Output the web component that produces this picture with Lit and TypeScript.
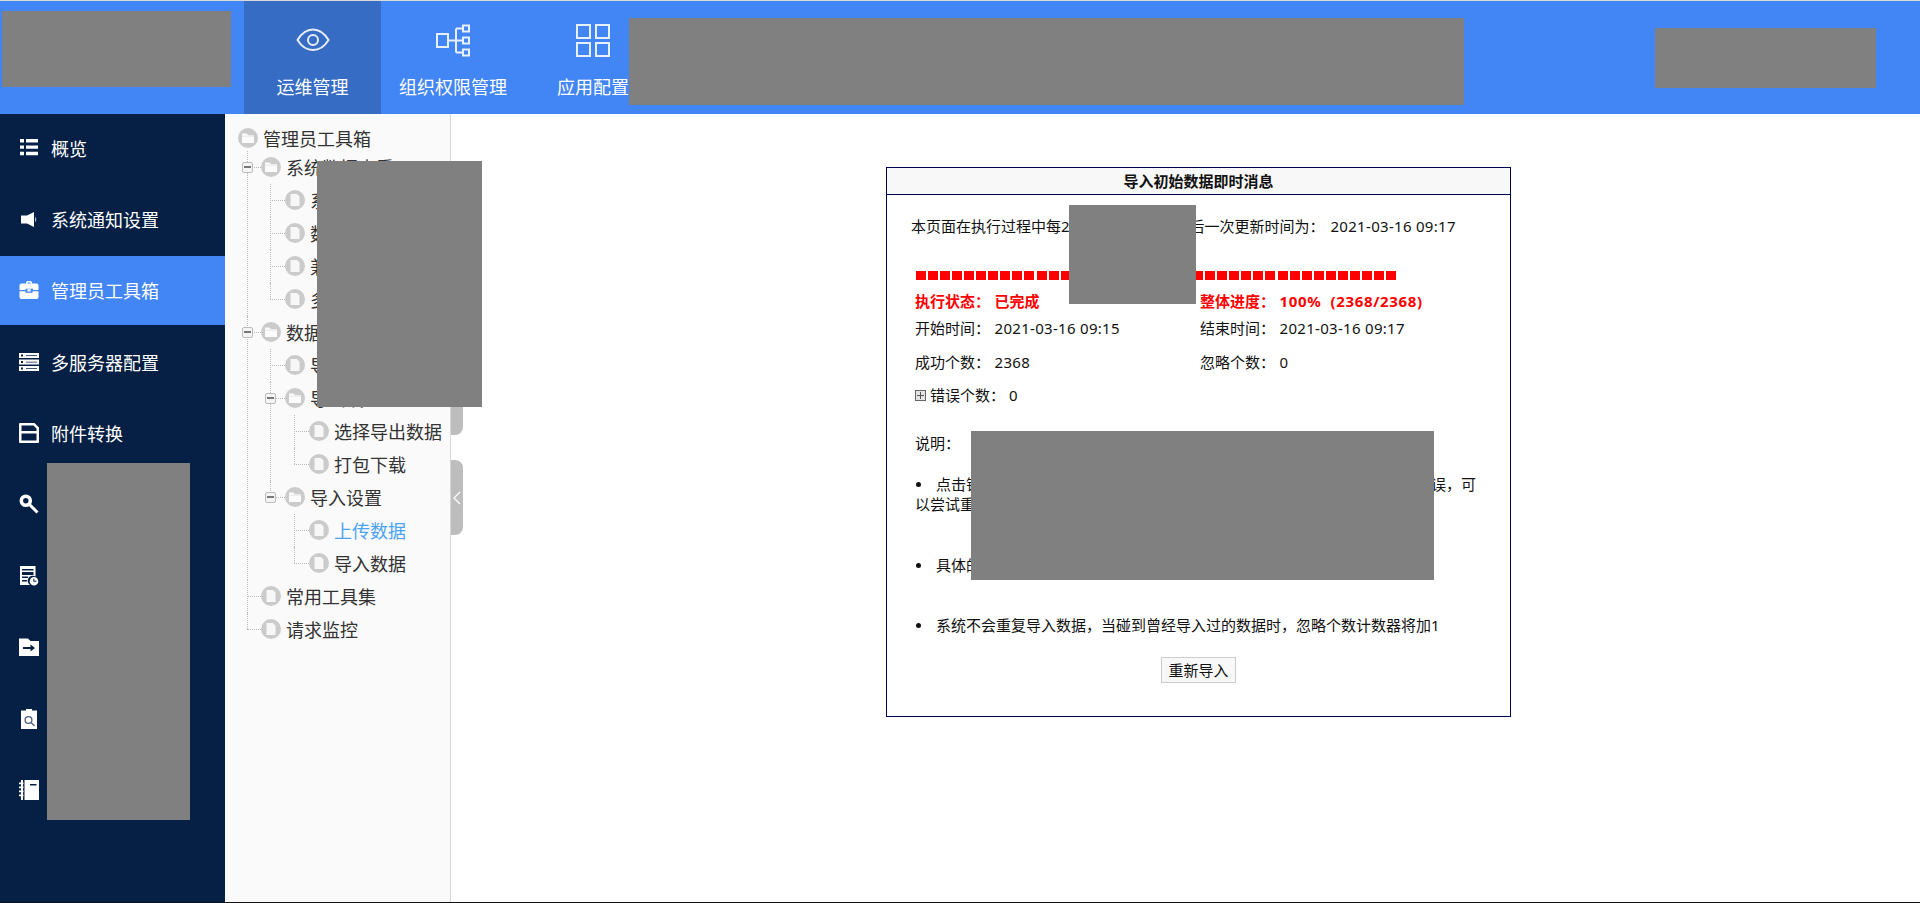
import { LitElement, html, css, svg, nothing } from "lit";
import { customElement } from "lit/decorators.js";

interface TreeNode {
    label: string;
    kind: "folder" | "file";
    active?: boolean;
    children?: TreeNode[];
}

const TREE: TreeNode = {
    label: "管理员工具箱",
    kind: "folder",
    children: [
        {
            label: "系统数据查看",
            kind: "folder",
            children: [
                { label: "系统信息", kind: "file" },
                { label: "数据统计", kind: "file" },
                { label: "兼容检查", kind: "file" },
                { label: "多语言", kind: "file" },
            ],
        },
        {
            label: "数据导入导出",
            kind: "folder",
            children: [
                { label: "导出记录", kind: "file" },
                {
                    label: "导出设置",
                    kind: "folder",
                    children: [
                        { label: "选择导出数据", kind: "file" },
                        { label: "打包下载", kind: "file" },
                    ],
                },
                {
                    label: "导入设置",
                    kind: "folder",
                    children: [
                        { label: "上传数据", kind: "file", active: true },
                        { label: "导入数据", kind: "file" },
                    ],
                },
            ],
        },
        { label: "常用工具集", kind: "file" },
        { label: "请求监控", kind: "file" },
    ],
};

const NAV_ICONS = [
    svg`<path d="M1.5 20C6 12.5 11 9.5 17 9.5S28 12.5 32.5 20C28 27.5 23 30 17 30S6 27.5 1.5 20Z"/><circle cx="17" cy="20" r="5"/>`,
    svg`<rect x="1" y="10" width="11" height="13"/><path d="M12 16.5H20M20 4.5V28.5M20 4.5H27M20 16.5H27M20 28.5H27"/><rect x="27" y="1.5" width="6" height="6"/><rect x="27" y="13.5" width="6" height="6"/><rect x="27" y="25.5" width="6" height="6"/>`,
    svg`<rect x="1" y="1" width="13" height="13"/><rect x="20" y="1" width="13" height="13"/><rect x="1" y="19" width="13" height="13"/><rect x="20" y="19" width="13" height="13"/>`,
];

const NAV = ["运维管理", "组织权限管理", "应用配置"];

const MENU = [
    {
        label: "概览",
        icon: svg`<path d="M1 1h4v3.4H1zM7 1h12v3.4H7zM1 7.400h4v3.400H1zM7 7.400h12v3.400H7zM1 13.800h4v3.400H1zM7 13.800h12v3.400H7z"/>`,
    },
    {
        label: "系统通知设置",
        icon: svg`<path d="M2 6.500h6L15 3v15l-7-3.500H2z"/><path d="M16.300 7.500c1.200 2 1.200 4 0 6z"/>`,
    },
    {
        label: "管理员工具箱",
        icon: svg`<path fill-rule="evenodd" d="M7 3.500V2.800C7 1.800 7.800 1 8.800 1h2.400c1 0 1.800.8 1.800 1.800v.7h4.500c1.200 0 2 .8 2 2V10h-5.500V8.800h-7.500V10H.5V5.500c0-1.200.8-2 2-2zm1.500 0h3v-1h-3zM.5 11.300h6v1.400h7v-1.400h6V17c0 1.200-.8 2-2 2h-15c-1.200 0-2-.8-2-2zM8.300 9.300h3.400v2.200H8.300z"/>`,
    },
    {
        label: "多服务器配置",
        icon: svg`<path fill-rule="evenodd" d="M0 1h20v5H0zM2 2.500v2h2v-2zM7 3.200v.8h11v-.8zM0 7.500h20v5H0zM2 9v2h2V9zM7 9.700v.8h11v-.8zM0 14h20v5H0zM2 15.500v2h2v-2zM7 16.200v.8h11v-.8z"/>`,
    },
    {
        label: "附件转换",
        icon: svg`<path fill-rule="evenodd" d="M1 0h14.500L20 4.500V19a1 1 0 0 1-1 1H1a1 1 0 0 1-1-1V1a1 1 0 0 1 1-1zM2.500 2.500v5.500h15V5.500l-3-3zM2.500 10.500v7h15v-7z"/>`,
    },
    {
        label: "密钥管理",
        icon: svg`<circle cx="6.800" cy="6.800" r="4.500" fill="none" stroke="#fff" stroke-width="3.600"/><path d="M10.500 10.500L18.500 18.500" fill="none" stroke="#fff" stroke-width="3"/>`,
    },
    {
        label: "日志管理",
        icon: svg`<path fill-rule="evenodd" d="M1 0h15.500v10.500a5 5 0 0 0-5.500 8.500H1zM3 3v1.500h11.500V3zM3 6v3h11.500V6zM3 10.500V12h6v-1.500zM3 14v1.500h5V14z"/><path fill-rule="evenodd" d="M15 11a4.300 4.300 0 1 1 0 8.600 4.300 4.300 0 0 1 0-8.600zm-.6 1.800v3h3v-1h-2v-2z"/>`,
    },
    {
        label: "文件迁移",
        icon: svg`<path fill-rule="evenodd" d="M0 1.500h9l2.500 2.500H20v15H0zM4 10v2h7.500v2.500L16 11l-4.500-3.500V10z"/>`,
    },
    {
        label: "审计查询",
        icon: svg`<path d="M7 0h6v1.500h5V20H2V1.500h5z"/><circle cx="9.500" cy="11" r="3.400" fill="none" stroke="#4d5f7d" stroke-width="1.300"/><path d="M12 13.500L15.500 17" fill="none" stroke="#4d5f7d" stroke-width="1.300"/>`,
    },
    {
        label: "操作手册",
        icon: svg`<path fill-rule="evenodd" d="M5.500 0H20v20H5.500zM11 4v1.500h6.500V4z"/><path d="M0 2.500h4.500v1.800H0zM0 6.500h4.500v1.800H0zM0 10.500h4.500v1.800H0zM0 14.500h4.500v1.800H0zM2 0h2v20H2z"/>`,
    },
];

const folderGlyph = svg`<path d="M4 5.500h4.500l1.500 1.700h6V15H4z" fill="#fbfbfb"/><path d="M4 8.200h12" stroke="#e4e4e4" stroke-width="0.800"/>`;
const fileGlyph = svg`<path d="M5.500 4h6.500l2.500 2.500V16h-9z" fill="#f7f7f7"/>`;

@customElement("app-root")
export class AppRoot extends LitElement {
    static styles = css`
    :host {
      display: flex;
      flex-direction: column;
      position: relative;
      height: 903px;
      box-sizing: border-box;
      border-top: 1px solid #d9d9d9;
      border-bottom: 1px solid #111;
      overflow: hidden;
      background: #fff;
      font-family: "Noto Sans", "Noto Sans CJK SC", sans-serif;
      color: #111;
    }

    .topbar {
      display: flex;
      flex: none;
      height: 113px;
      padding-left: 244px;
      background: #4285f4;
      color: #fff;
    }

    .nav-item {
      display: flex;
      flex-direction: column;
      align-items: center;
      box-sizing: border-box;
      min-width: 136px;
      padding: 19px 18px 0;
      font-size: 18px;
      line-height: 26px;
    }

    .nav-item.active {
      width: 137px;
      background: #366cc4;
    }

    .nav-item svg {
      width: 34px;
      height: 40px;
      margin-bottom: 14px;
      fill: none;
      stroke: #fff;
      stroke-width: 2;
      opacity: 0.88;
    }

    .body {
      display: flex;
      flex: 1;
      min-height: 0;
    }

    .menu {
      flex: none;
      width: 225px;
      background: #051f45;
      color: #fff;
    }

    .menu-item {
      display: flex;
      align-items: center;
      gap: 12px;
      height: 69px;
      margin-bottom: 2.4px;
      padding-left: 19px;
      font-size: 18px;
    }

    .menu-item:first-child {
      margin-top: -1px;
    }

    .menu-item.active {
      background: #4285f4;
    }

    .menu-item svg {
      flex: none;
      width: 20px;
      height: 20px;
      fill: #fff;
    }

    .tree {
      flex: none;
      box-sizing: border-box;
      width: 226px;
      padding: 7.5px 0 0 13px;
      background: #fafafa;
      border-right: 1px solid #d8d8d8;
      font-size: 18px;
      color: #333;
    }

    ul {
      margin: 0;
      padding: 0 0 0 24px;
      list-style: none;
    }

    .tree > ul {
      padding-left: 0;
    }

    .tree > ul > li > ul {
      margin-top: -4px;
      padding-left: 23px;
    }

    li {
      position: relative;
    }

    .row {
      display: flex;
      align-items: center;
      gap: 5px;
      height: 33px;
      white-space: nowrap;
    }

    .row svg {
      flex: none;
      width: 20px;
      height: 20px;
    }

    .row.active {
      color: #4aa3f5;
    }

    li.branch::before {
      content: "";
      position: absolute;
      left: -15px;
      top: 0;
      bottom: 0;
      border-left: 1px dotted #bbb;
    }

    li.branch:last-child::before {
      bottom: auto;
      height: 16px;
    }

    li.branch::after {
      content: "";
      position: absolute;
      left: -15px;
      top: 16px;
      width: 15px;
      border-top: 1px dotted #bbb;
    }

    .tree > ul > li > ul > li::before,
    .tree > ul > li > ul > li::after {
      left: -14px;
    }

    .tree > ul > li > ul > li::after {
      width: 14px;
    }

    .tree > ul > li > ul > li > .toggle {
      left: -19px;
    }

    .toggle {
      position: absolute;
      left: -20px;
      top: 11px;
      z-index: 1;
      box-sizing: border-box;
      width: 11px;
      height: 11px;
      border: 1px solid #bbb;
      border-radius: 2px;
      background: #f4f4f4;
    }

    .toggle::after {
      content: "";
      display: block;
      margin: 3px 1px 0;
      height: 2px;
      background: #777;
    }

    .handle {
      position: absolute;
      left: 451px;
      width: 12px;
      height: 75px;
      border-radius: 0 8px 8px 0;
      background: #bdbdbd;
    }

    .handle.upper {
      top: 359px;
    }

    .handle.lower {
      top: 459px;
      display: flex;
      align-items: center;
      justify-content: center;
    }

    .handle svg {
      width: 8px;
      height: 14px;
      fill: none;
      stroke: #fff;
      stroke-width: 1.2;
    }

    .content {
      flex: 1;
      padding: 53px 0 0 435px;
    }

    .panel {
      box-sizing: border-box;
      width: 625px;
      height: 550px;
      border: 1px solid #000050;
      font-size: 15px;
    }

    .panel-title {
      height: 26px;
      border-bottom: 1px solid #000050;
      background: #f8f8f8;
      font-weight: 700;
      line-height: 26px;
      text-align: center;
    }

    .panel-body {
      padding: 19px 28px 0;
      line-height: 24px;
    }

    .refresh {
      margin-left: -4px;
    }

    .num {
      letter-spacing: 0.3px;
    }

    .status .num {
      letter-spacing: 0.65px;
    }

    .refresh .num {
      margin-left: 2px;
    }

    .bar {
      width: 481px;
      height: 9px;
      margin: 33px 0 0 1px;
      background: repeating-linear-gradient(90deg, #f00 0 10px, transparent 10px 12.05px);
    }

    .grid {
      display: grid;
      grid-template-columns: 285px 1fr;
      margin-top: 9px;
    }

    .field {
      display: flex;
      height: 24px;
    }

    .field.status {
      height: 27px;
      color: #f00;
      font-weight: 700;
    }

    .field.count {
      height: 34px;
      padding-top: 10px;
    }

    .key {
      width: 79.5px;
    }

    .errors {
      display: flex;
      align-items: center;
      margin-top: -1px;
    }

    .errors .key {
      width: 79px;
    }

    .plus {
      box-sizing: border-box;
      width: 11px;
      height: 11px;
      margin-right: 4px;
      border: 1px solid #666;
      background: linear-gradient(#555, #555) center / 7px 1px no-repeat,
        linear-gradient(#555, #555) center / 1px 7px no-repeat, #e4e4e4;
    }

    .notes-title {
      margin-top: 24px;
    }

    .note {
      margin: 19px 0 0;
      line-height: 20px;
    }

    .note.second {
      margin-top: 41px;
    }

    .note.third {
      margin-top: 40px;
    }

    .note .dot {
      display: inline-block;
      box-sizing: border-box;
      width: 5px;
      height: 5px;
      margin: 0 15px 2px 1px;
      border-radius: 50%;
      background: #111;
      vertical-align: middle;
    }

    .actions {
      display: flex;
      justify-content: center;
      margin-top: 22px;
    }

    button {
      box-sizing: border-box;
      width: 75px;
      height: 26px;
      padding: 0;
      border: 1px solid #ccc;
      background: #f8f8f8;
      font: inherit;
      line-height: 24px;
      color: #111;
    }

    .mask {
      position: absolute;
      background: #808080;
    }

    .mask.logo {
      left: 2px;
      top: 10px;
      width: 229px;
      height: 76px;
    }

    .mask.top-mid {
      left: 629px;
      top: 17px;
      width: 835px;
      height: 87px;
    }

    .mask.top-right {
      left: 1655px;
      top: 27px;
      width: 221px;
      height: 60px;
    }

    .mask.side {
      left: 47px;
      top: 462px;
      width: 143px;
      height: 357px;
    }

    .mask.tree-mask {
      left: 317px;
      top: 160px;
      width: 165px;
      height: 246px;
    }

    .mask.bar-mask {
      left: 1069px;
      top: 204px;
      width: 127px;
      height: 99px;
    }

    .mask.note-mask {
      left: 971px;
      top: 430px;
      width: 463px;
      height: 149px;
    }
  `;

    renderNode(node: TreeNode, depth: number): unknown {
        const open = node.kind === "folder" && node.children;
        return html`
      <li class=${depth > 0 ? "branch" : ""}>
        ${open && depth > 0 ? html`<span class="toggle"></span>` : nothing}
        <div class="row ${node.active ? "active" : ""}">
          <svg viewBox="0 0 20 20">
            <circle cx="10" cy="10" r="10" fill="#cbcbcb"></circle>
            ${node.kind === "folder" ? folderGlyph : fileGlyph}
          </svg>
          <span>${node.label}</span>
        </div>
        ${open
                ? html`<ul>${node.children!.map((c) => this.renderNode(c, depth + 1))}</ul>`
                : nothing}
      </li>
    `;
    }

    render() {
        return html`
      <header class="topbar">
        ${NAV.map(
                    (label, i) => html`
            <div class="nav-item ${i === 0 ? "active" : ""}">
              <svg viewBox="0 0 34 40">${i === 0 ? NAV_ICONS[0] : svg`<g transform="translate(0 4)">${NAV_ICONS[i]}</g>`}</svg>
              <span>${label}</span>
            </div>
          `
                )}
      </header>

      <div class="body">
        <nav class="menu">
          ${MENU.map(
                    (m, i) => html`
              <div class="menu-item ${i === 2 ? "active" : ""}">
                <svg viewBox="0 0 20 20">${m.icon}</svg>
                <span>${m.label}</span>
              </div>
            `
                )}
        </nav>

        <aside class="tree">
          <ul>${this.renderNode(TREE, 0)}</ul>
        </aside>

        <main class="content">
          <section class="panel">
            <div class="panel-title">导入初始数据即时消息</div>
            <div class="panel-body">
              <div class="refresh">本页面在执行过程中每2秒自动刷新一次最后一次更新时间为：&nbsp;<span class="num">2021-03-16 09:17</span></div>
              <div class="bar"></div>
              <div class="grid">
                <div class="field status"><span class="key">执行状态：</span><span>已完成</span></div>
                <div class="field status"><span class="key">整体进度：</span><span class="num">100%&nbsp;&nbsp;(2368/2368)</span></div>
                <div class="field"><span class="key">开始时间：</span><span class="num">2021-03-16 09:15</span></div>
                <div class="field"><span class="key">结束时间：</span><span class="num">2021-03-16 09:17</span></div>
                <div class="field count"><span class="key">成功个数：</span><span class="num">2368</span></div>
                <div class="field count"><span class="key">忽略个数：</span><span class="num">0</span></div>
              </div>
              <div class="errors"><span class="plus"></span><span class="key">错误个数：</span><span class="num">0</span></div>
              <div class="notes-title">说明：</div>
              <p class="note"><span class="dot"></span>点击错误个数前的图标可以查看错误详情，如果错误原因为网络连接超时错误，可<br />以尝试重新导入</p>
              <p class="note second"><span class="dot"></span>具体的错误信息请查看系统日志</p>
              <p class="note third"><span class="dot"></span>系统不会重复导入数据，当碰到曾经导入过的数据时，忽略个数计数器将加1</p>
              <div class="actions"><button>重新导入</button></div>
            </div>
          </section>
        </main>
      </div>

      <div class="handle upper"></div>
      <div class="handle lower">
        <svg viewBox="0 0 8 14"><path d="M7 1L1 7l6 6"></path></svg>
      </div>

      <div class="mask logo"></div>
      <div class="mask top-mid"></div>
      <div class="mask top-right"></div>
      <div class="mask side"></div>
      <div class="mask tree-mask"></div>
      <div class="mask bar-mask"></div>
      <div class="mask note-mask"></div>
    `;
    }
}
